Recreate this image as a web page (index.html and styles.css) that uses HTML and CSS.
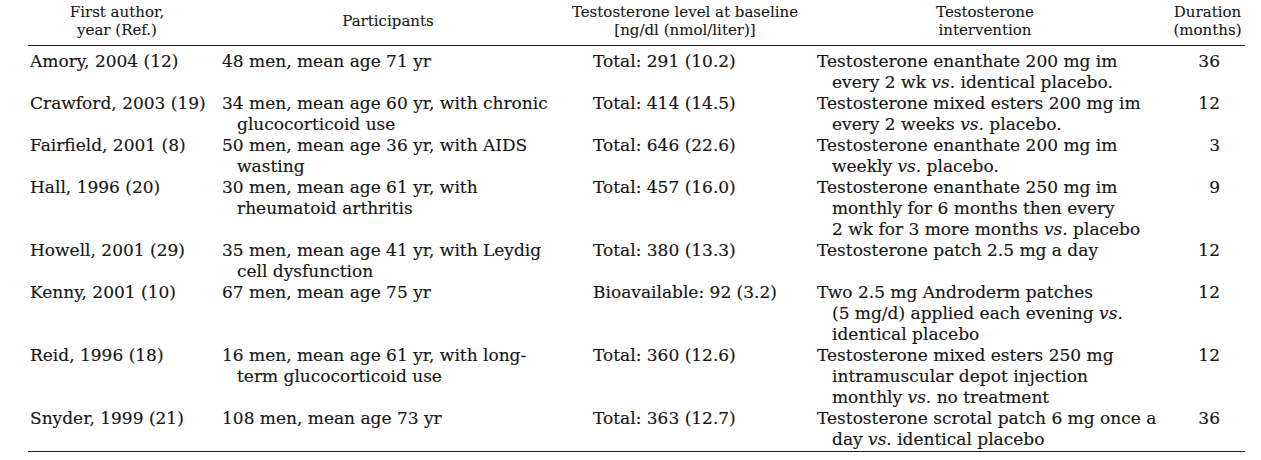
FILE: index.html
```html
<!DOCTYPE html>
<html>
<head>
<meta charset="utf-8">
<link rel="stylesheet" href="styles.css">
</head>
<body>
<table class="tbl">
  <colgroup>
    <col class="c1"><col class="c2"><col class="c3"><col class="c4"><col class="c5">
  </colgroup>
  <thead>
    <tr>
      <th>First author,<br>year (Ref.)</th>
      <th>Participants</th>
      <th>Testosterone level at baseline<br>[ng/dl (nmol/liter)]</th>
      <th>Testosterone<br>intervention</th>
      <th class="dur-h">Duration<br>(months)</th>
    </tr>
  </thead>
  <tbody>
    <tr>
      <td class="a">Amory, 2004 (12)</td>
      <td class="p"><div>48 men, mean age 71 yr</div></td>
      <td class="b">Total: 291 (10.2)</td>
      <td class="i"><div>Testosterone enanthate 200 mg im</div><div class="ind">every 2 wk <em>vs.</em> identical placebo.</div></td>
      <td class="d">36</td>
    </tr>
    <tr>
      <td class="a">Crawford, 2003 (19)</td>
      <td class="p"><div>34 men, mean age 60 yr, with chronic</div><div class="ind">glucocorticoid use</div></td>
      <td class="b">Total: 414 (14.5)</td>
      <td class="i"><div>Testosterone mixed esters 200 mg im</div><div class="ind">every 2 weeks <em>vs.</em> placebo.</div></td>
      <td class="d">12</td>
    </tr>
    <tr>
      <td class="a">Fairfield, 2001 (8)</td>
      <td class="p"><div>50 men, mean age 36 yr, with AIDS</div><div class="ind">wasting</div></td>
      <td class="b">Total: 646 (22.6)</td>
      <td class="i"><div>Testosterone enanthate 200 mg im</div><div class="ind">weekly <em>vs.</em> placebo.</div></td>
      <td class="d">3</td>
    </tr>
    <tr>
      <td class="a">Hall, 1996 (20)</td>
      <td class="p"><div>30 men, mean age 61 yr, with</div><div class="ind">rheumatoid arthritis</div></td>
      <td class="b">Total: 457 (16.0)</td>
      <td class="i"><div>Testosterone enanthate 250 mg im</div><div class="ind">monthly for 6 months then every</div><div class="ind">2 wk for 3 more months <em>vs.</em> placebo</div></td>
      <td class="d">9</td>
    </tr>
    <tr>
      <td class="a">Howell, 2001 (29)</td>
      <td class="p"><div>35 men, mean age 41 yr, with Leydig</div><div class="ind">cell dysfunction</div></td>
      <td class="b">Total: 380 (13.3)</td>
      <td class="i"><div>Testosterone patch 2.5 mg a day</div></td>
      <td class="d">12</td>
    </tr>
    <tr>
      <td class="a">Kenny, 2001 (10)</td>
      <td class="p"><div>67 men, mean age 75 yr</div></td>
      <td class="b">Bioavailable: 92 (3.2)</td>
      <td class="i"><div>Two 2.5 mg Androderm patches</div><div class="ind">(5 mg/d) applied each evening <em>vs.</em></div><div class="ind">identical placebo</div></td>
      <td class="d">12</td>
    </tr>
    <tr>
      <td class="a">Reid, 1996 (18)</td>
      <td class="p"><div>16 men, mean age 61 yr, with long-</div><div class="ind">term glucocorticoid use</div></td>
      <td class="b">Total: 360 (12.6)</td>
      <td class="i"><div>Testosterone mixed esters 250 mg</div><div class="ind">intramuscular depot injection</div><div class="ind">monthly <em>vs.</em> no treatment</div></td>
      <td class="d">12</td>
    </tr>
    <tr>
      <td class="a">Snyder, 1999 (21)</td>
      <td class="p"><div>108 men, mean age 73 yr</div></td>
      <td class="b">Total: 363 (12.7)</td>
      <td class="i"><div>Testosterone scrotal patch 6 mg once a</div><div class="ind">day <em>vs.</em> identical placebo</div></td>
      <td class="d">36</td>
    </tr>
  </tbody>
</table>
</body>
</html>
```
FILE: styles.css
```css
html, body {
  margin: 0;
  padding: 0;
  background: #ffffff;
}
body {
  padding: 3px 0 0 28px;
  color: #161616;
  font-family: "DejaVu Serif", "Liberation Serif", serif;
}
.tbl {
  border-collapse: collapse;
  table-layout: fixed;
  width: 1217px;
}
.c1 { width: 178px; }
.c2 { width: 364px; }
.c3 { width: 230px; }
.c4 { width: 370px; }
.c5 { width: 75px; }
.tbl th {
  font-weight: normal;
  font-size: 15px;
  line-height: 18px;
  text-align: center;
  vertical-align: middle;
  padding: 0 0 6px 0;
  border-bottom: 1px solid #1c1c1c;
  -webkit-text-stroke: 0.1px #161616;
}
.tbl td {
  font-size: 17px;
  line-height: 21px;
  vertical-align: top;
  padding: 0;
  white-space: nowrap;
  -webkit-text-stroke: 0.15px #161616;
}
.tbl tbody tr:first-child td { padding-top: 5px; }
.tbl tbody tr:last-child td {
  padding-bottom: 1px;
  border-bottom: 1px solid #1c1c1c;
}
.a { padding-left: 2px !important; }
.p { padding-left: 16px !important; }
.b { padding-left: 23px !important; }
.i { padding-left: 17px !important; }
.d { text-align: right; padding-right: 25px !important; }
.ind { padding-left: 15px; }
em { font-style: italic; }
```
